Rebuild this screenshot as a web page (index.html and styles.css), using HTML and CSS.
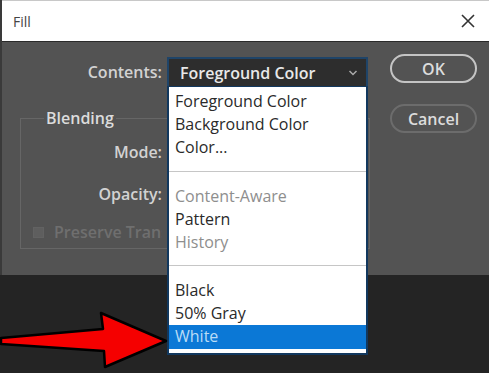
FILE: index.html
```html
<!DOCTYPE html>
<html lang="en">
<head>
    <meta charset="UTF-8">
    <meta name="viewport" content="width=device-width, initial-scale=1.0">
    <title>Fill</title>
    <link rel="stylesheet" href="styles.css">
</head>
<body>
    <div class="dialog">
        <div class="titlebar">
            <span class="title">Fill</span>
            <svg class="close" width="16" height="16" viewBox="0 0 16 16">
                <path d="M2 2 L14 14 M14 2 L2 14" stroke="#333" stroke-width="1.6" fill="none"/>
            </svg>
        </div>

        <div class="content">
            <div class="form">
                <div class="row contents-row">
                    <label class="label">Contents:</label>
                    <div class="select">
                        <span>Foreground Color</span>
                        <svg class="chevron" width="10" height="8" viewBox="0 0 10 8">
                            <path d="M1.5 2 L5 5.5 L8.5 2" stroke="#aaa" stroke-width="1.5" fill="none"/>
                        </svg>
                    </div>
                </div>

                <fieldset class="blending">
                    <legend>Blending</legend>
                    <div class="row"><label class="label">Mode:</label></div>
                    <div class="row"><label class="label">Opacity:</label></div>
                    <div class="check-row">
                        <span class="checkbox"></span>
                        <span class="check-text">Preserve Transparency</span>
                    </div>
                </fieldset>
            </div>

            <div class="buttons">
                <button class="btn btn-primary">OK</button>
                <button class="btn">Cancel</button>
            </div>
        </div>
    </div>

    <!-- open dropdown of the Contents select -->
    <ul class="menu">
        <li>Foreground Color</li>
        <li>Background Color</li>
        <li>Color...</li>
        <li class="sep"></li>
        <li class="disabled">Content-Aware</li>
        <li>Pattern</li>
        <li class="disabled">History</li>
        <li class="sep sep-2"></li>
        <li>Black</li>
        <li>50% Gray</li>
        <li class="active">White</li>
    </ul>

    <svg class="arrow" width="170" height="64" viewBox="0 0 170 64">
        <polygon points="1,32 103,23 101,7 166,35 105,61 104,45 1,38"
                 fill="#f50000" stroke="#000" stroke-width="2.5" stroke-linejoin="round"/>
    </svg>
</body>
</html>
```

FILE: styles.css
```css
* {
    margin: 0;
    padding: 0;
    box-sizing: border-box;
}

body {
    font-family: 'Open Sans', 'Noto Sans', sans-serif;
    background: #242424;
    width: 489px;
    height: 373px;
    overflow: hidden;
    position: relative;
}

.dialog {
    height: 275px;
    background: #535353;
    border-left: 2px solid #3a3a3a;
}

.titlebar {
    height: 42px;
    background: #fff;
    border-top: 1px solid #c8c8c8;
    border-bottom: 1px solid #2a2a2a;
    display: flex;
    align-items: center;
    justify-content: space-between;
    padding: 0 13px 0 11px;
}

.title {
    font-size: 14px;
    color: #444;
}

.content {
    display: flex;
    padding: 15px 12px 0 0;
}

.form {
    flex: 1;
}

.row {
    display: flex;
    align-items: center;
    height: 29px;
}

.label {
    width: 160px;
    text-align: right;
    font-size: 16px;
    font-weight: 600;
    color: #d2d2d2;
}

.select {
    margin-left: 5px;
    width: 201px;
    height: 29px;
    background: #2d2d2d;
    border: 2px solid #1f4468;
    border-bottom: none;
    display: flex;
    align-items: center;
    justify-content: space-between;
    padding: 0 8px 0 11px;
    font-size: 16px;
    font-weight: 600;
    color: #e8e8e8;
}

.blending {
    margin: 21px 0 0 18px;
    width: 350px;
    height: 142px;
    border: 1px solid #666;
    padding: 2px 0 0;
}

.blending legend {
    margin-left: 23px;
    padding: 0 2px;
    font-size: 16px;
    font-weight: 600;
    color: #dcdcdc;
}

.blending .row {
    margin-left: -19px;
    height: 42px;
}

.check-row {
    display: flex;
    align-items: center;
    gap: 10px;
    margin: 6px 0 0 12px;
}

.checkbox {
    width: 11px;
    height: 11px;
    background: #5e5e5e;
    border: 1px solid #626262;
}

.check-text {
    flex: none;
    width: 108px;
    overflow: hidden;
    white-space: nowrap;
    font-size: 16px;
    font-weight: 600;
    color: #6f6f6f;
}

.buttons {
    display: flex;
    flex-direction: column;
    gap: 21px;
    width: 87px;
    margin-top: -3px;
}

.btn {
    height: 29px;
    border-radius: 15px;
    background: transparent;
    border: 2px solid #6c6c6c;
    font-family: inherit;
    font-size: 16px;
    font-weight: 600;
    color: #dcdcdc;
}

.btn-primary {
    border-color: #c4c4c4;
}

.menu {
    position: absolute;
    left: 167px;
    top: 86px;
    width: 201px;
    list-style: none;
    background: #fff;
    border: 2px solid #12385e;
    border-top: 1px solid #12385e;
    padding: 3px 0 4px;
    font-size: 16px;
    color: #2a2a2a;
}

.menu li {
    height: 23px;
    line-height: 23px;
    padding-left: 6px;
}

.menu li.sep {
    height: 1px;
    margin: 12px 0 13px;
    background: #c6c6c6;
}

.menu li.sep-2 {
    margin: 11px 0 13px;
}

.menu li.disabled {
    color: #8e8e8e;
}

.menu li.active {
    height: 24px;
    background: #0b78d6;
    color: #b9dcf7;
}

.arrow {
    position: absolute;
    left: 0;
    top: 306px;
}
```
